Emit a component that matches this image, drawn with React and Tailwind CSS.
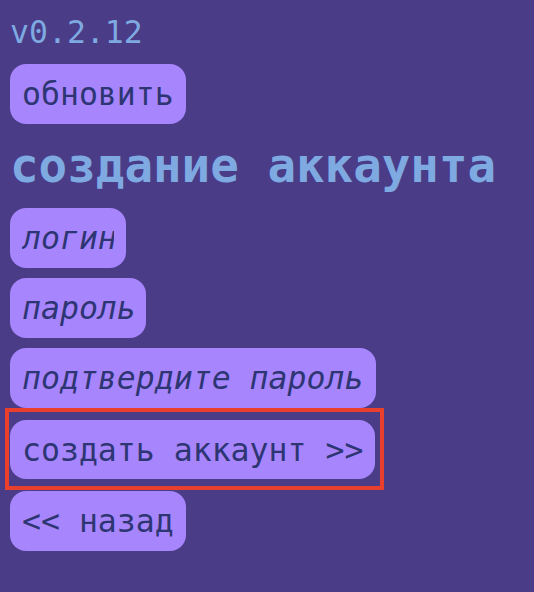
import React, { useState } from 'react';

const mono = { fontFamily: '"DejaVu Sans Mono", "Liberation Mono", monospace' };

const btn =
    'block w-fit rounded-2xl bg-[#a685fd] px-3 py-[14px] text-[31.5px] leading-8 text-[#2d3572] text-left';

const Field = ({ placeholder, width, type = 'text', value, onChange }) => (
    <input
        type={type}
        placeholder={placeholder}
        value={value}
        onChange={e => onChange(e.target.value)}
        className={`${width} block h-[60px] rounded-2xl bg-[#a685fd] px-3 py-0 text-[31.5px] leading-8 text-[#2d3572] italic placeholder:text-[#2d3572] placeholder:italic outline-none`}
        style={mono}
    />
);

const App = () => {
    const [login, setLogin] = useState('');
    const [password, setPassword] = useState('');
    const [confirm, setConfirm] = useState('');

    return (
        <div className="min-h-[592px] w-full bg-[#4a3c87] px-[10px]" style={mono}>
            <div className="pt-4 text-[31.5px] leading-8 text-[#7ea9e1]">v0.2.12</div>

            <button className={`${btn} mt-4`} style={mono}>обновить</button>

            <h1 className="mt-[18px] text-[47.5px] font-bold leading-[48px] text-[#7ea9e1]">
                создание аккаунта
            </h1>

            <div className="mt-[18px] flex flex-col">
                <Field placeholder="логин" width="w-[116px]" value={login} onChange={setLogin} />
                <div className="mt-[10px]">
                    <Field placeholder="пароль" width="w-[136px]" type="password" value={password} onChange={setPassword} />
                </div>
                <div className="mt-[10px]">
                    <Field placeholder="подтвердите пароль" width="w-[366px]" type="password" value={confirm} onChange={setConfirm} />
                </div>

                {/* submit, with its highlight frame */}
                <div className="relative mt-3 w-fit">
                    <button className={`${btn} h-[59px] py-0`} style={mono}>создать аккаунт &gt;&gt;</button>
                    <span className="pointer-events-none absolute -top-[12px] -bottom-[11px] -left-[5px] -right-[9px] border-4 border-[#e8402c]" />
                </div>

                <button className={`${btn} mt-3`} style={mono}>&lt;&lt; назад</button>
            </div>
        </div>
    );
};

export default App;
